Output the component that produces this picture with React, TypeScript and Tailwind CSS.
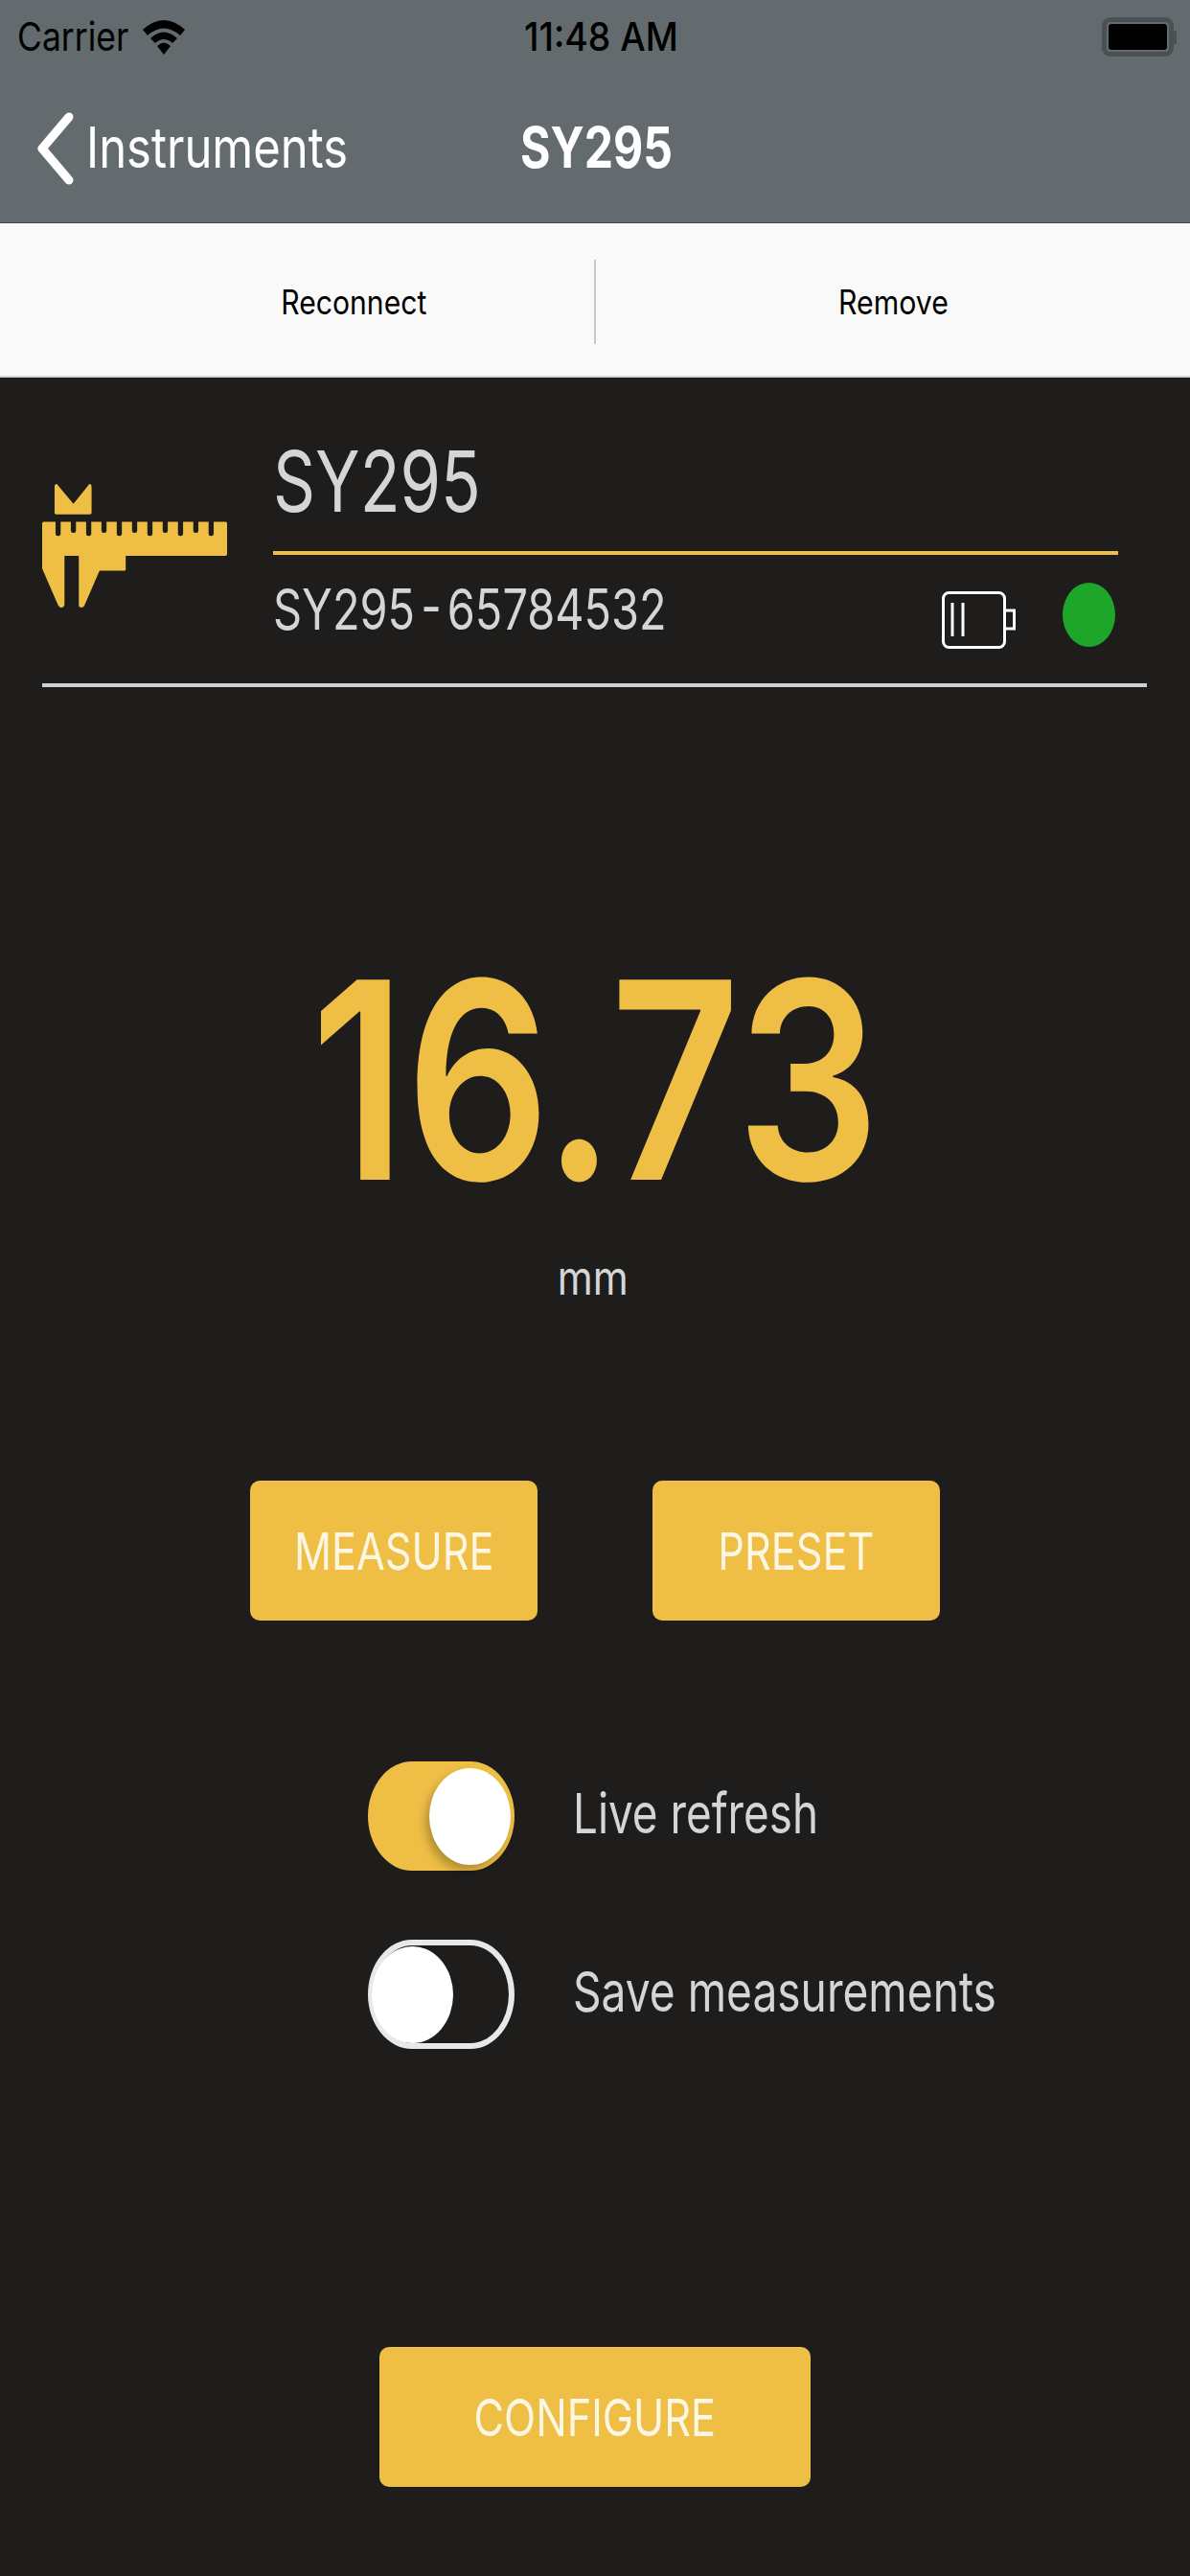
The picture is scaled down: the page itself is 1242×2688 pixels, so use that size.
import React from 'react'

const ticks = [50, 98, 146, 194, 242, 290, 338, 386, 434, 482, 530]

function Caliper() {
  return (
    <svg width="193" height="130" viewBox="0 0 580 390" className="shrink-0">
      <path d="M46 0 L98 62 L148 0 Q155 0 155 10 L155 90 Q155 95 150 95 L44 95 Q39 95 39 90 L39 8 Q39 0 46 0Z" fill="#efbe45" />
      <path
        d="M5 118 L575 118 Q580 118 580 123 L580 220 Q580 225 575 225 L262 225 L262 268 Q262 272 258 272 L180 272 L132 382 Q126 390 118 386 Q115 384 115 378 L115 225 L70 225 L70 378 Q68 388 58 387 Q53 386 50 380 L0 265 L0 123 Q0 118 5 118Z"
        fill="#efbe45"
      />
      {ticks.map((x, i) => (
        <rect key={x} x={x - 8} y={112} width={16} height={i % 2 === 0 ? 51 : 41} rx={7} fill="#1e1d1c" />
      ))}
    </svg>
  )
}

function BatteryOutline() {
  return (
    <svg width="77" height="60" viewBox="0 0 77 60" fill="none" stroke="#ffffff" strokeWidth="3">
      <rect x="1.5" y="1.5" width="64" height="57" rx="6" />
      <rect x="65.5" y="20" width="10" height="19" />
      <path d="M11 12 V47 M22 12 V47" />
    </svg>
  )
}

function Wifi() {
  return (
    <svg width="44" height="37" viewBox="0 0 44 37" className="ml-[16px]">
      <path d="M0 11 Q22 -9 44 11 L39 17 Q22 2 5 17Z" fill="#000" />
      <path d="M8 20 Q22 7 36 20 L31 25 Q22 17 13 25Z" fill="#000" />
      <path d="M15 28 Q22 21 29 28 L22 37Z" fill="#000" />
    </svg>
  )
}

function ActionButton({ label, wide }: { label: string; wide?: boolean }) {
  return (
    <button className={`h-[146px] rounded-[10px] bg-[#efbe45] flex items-center justify-center text-[54px] text-[#fdf6e3] ${wide ? 'w-[450px]' : 'w-[300px]'}`}>
      <span className="scale-x-[0.8] whitespace-nowrap">{label}</span>
    </button>
  )
}

export default function App() {
  return (
    <div className="w-[1242px] h-[2688px] bg-[#1e1d1c] flex flex-col overflow-hidden font-['Inter','Liberation_Sans',sans-serif]">
      {/* Status bar + nav */}
      <div className="h-[233px] bg-[#636b6e] border-b border-[#41474a] shrink-0">
        <div className="h-[77px] flex items-center pl-[18px] pr-[14px] relative">
          <span className="text-[41px] text-black scale-x-[0.865] origin-left w-[115px] whitespace-nowrap">Carrier</span>
          <Wifi />
          <span className="absolute left-[547px] text-[41px] font-medium text-black scale-x-[0.91] origin-left whitespace-nowrap">11:48 AM</span>
          <div className="ml-auto flex items-center">
            <div className="w-[75px] h-[41px] rounded-[9px] border-[5px] border-[#4a5053] p-[2px]">
              <div className="w-full h-full bg-black rounded-[3px]" />
            </div>
            <div className="w-[3px] h-[14px] bg-[#4a5053]" />
          </div>
        </div>
        <div className="h-[155px] flex items-center pl-[38px] relative">
          <svg width="40" height="78" viewBox="0 0 40 78" fill="none" stroke="#ffffff" strokeWidth="9" strokeLinecap="round" strokeLinejoin="round">
            <path d="M34 6 L6 39 L34 72" />
          </svg>
          <span className="ml-[12px] text-[59px] text-white scale-x-[0.83] origin-left whitespace-nowrap">Instruments</span>
          <span className="absolute left-[543px] text-[59px] font-bold text-white scale-x-[0.815] origin-left whitespace-nowrap">SY295</span>
        </div>
      </div>

      {/* Toolbar */}
      <div className="h-[161px] bg-[#f9f9f9] border-b-2 border-[#d5d5d5] shrink-0 flex items-center pt-[4px]">
        <div className="w-[620px] flex justify-center pl-[119px]">
          <span className="mt-[2px] text-[35px] text-black scale-x-[0.86] whitespace-nowrap">Reconnect</span>
        </div>
        <div className="w-[2px] h-[88px] bg-[#c8c8c8]" />
        <div className="flex-1 flex justify-center">
          <span className="mt-[2px] text-[35px] text-black scale-x-[0.865] whitespace-nowrap">Remove</span>
        </div>
      </div>

      {/* Instrument header */}
      <div className="pl-[44px] pt-[66px] flex shrink-0">
        <div className="w-[241px] pt-[45px]">
          <Caliper />
        </div>
        <div className="w-[882px]">
          <div className="h-[84px] flex items-center text-[88px] text-[#d3d5d6]">
            <span className="scale-x-[0.78] origin-left whitespace-nowrap">SY295</span>
          </div>
          <div className="mt-[31px] h-[4px] bg-[#efbe45]" />
          <div className="h-[114px] flex items-center text-[59px] text-[#d3d5d6] relative">
            <span className="scale-x-[0.795] origin-left whitespace-nowrap [word-spacing:-9px]">SY295 - 65784532</span>
            <div className="absolute left-[698px] top-[38px]">
              <BatteryOutline />
            </div>
            <div className="absolute left-[824px] top-[29px] w-[55px] h-[67px] rounded-[50%] bg-[#1ea62a]" />
          </div>
        </div>
      </div>
      <div className="ml-[44px] mt-[20px] w-[1153px] h-[4px] bg-[#d0d0d0] shrink-0" />

      {/* Reading */}
      <div className="mt-[260px] h-[300px] flex items-center justify-center text-[287px] font-semibold text-[#efbe45] shrink-0">
        <span className="scale-x-[0.82] whitespace-nowrap">16.73</span>
      </div>
      <div className="mt-[26px] h-[60px] flex items-center justify-center pr-[4px] text-[50px] text-[#d3d5d6] shrink-0">
        <span className="scale-x-[0.845]">mm</span>
      </div>

      {/* Actions */}
      <div className="mt-[182px] flex justify-center gap-[120px] shrink-0">
        <ActionButton label="MEASURE" />
        <ActionButton label="PRESET" />
      </div>

      {/* Toggles */}
      <div className="mt-[147px] pl-[384px] flex flex-col gap-[72px] shrink-0">
        <div className="flex items-center gap-[61px]">
          <div className="w-[153px] h-[114px] rounded-[46px/57px] bg-[#efbe45] flex items-center justify-end pr-[4px]">
            <div className="w-[85px] h-[101px] rounded-[50%] bg-white shadow-[-4px_6px_10px_rgba(0,0,0,0.25)]" />
          </div>
          <span className="mb-[6px] text-[58px] text-[#d3d5d6] scale-x-[0.79] origin-left whitespace-nowrap">Live refresh</span>
        </div>
        <div className="flex items-center gap-[61px]">
          <div className="w-[153px] h-[114px] rounded-[46px/57px] border-[6px] border-[#e8e8e8] flex items-center">
            <div className="w-[85px] h-[101px] rounded-[50%] bg-white -ml-[2px]" />
          </div>
          <span className="mb-[6px] text-[58px] text-[#d3d5d6] scale-x-[0.795] origin-left whitespace-nowrap">Save measurements</span>
        </div>
      </div>

      <div className="mt-[311px] flex justify-center shrink-0">
        <ActionButton label="CONFIGURE" wide />
      </div>
    </div>
  )
}
